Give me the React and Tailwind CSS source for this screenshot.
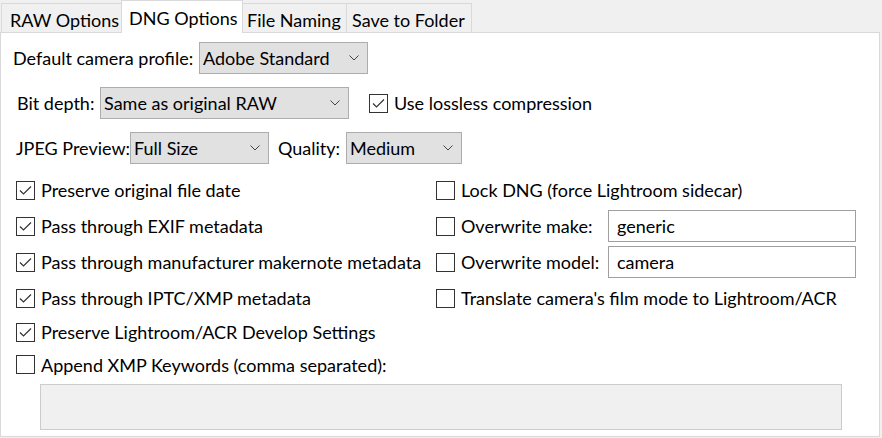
const FONT = "font-['Lato','Noto_Sans',sans-serif]";

function Chevron() {
  return (
    <svg width="10" height="6" viewBox="0 0 10 6" className="shrink-0">
      <path d="M0.5 0.5 L5 5 L9.5 0.5" fill="none" stroke="#444" strokeWidth="1" />
    </svg>
  );
}

function Select({ value, className }) {
  return (
    <div className={`flex h-[32px] items-center justify-between border border-[#adadad] bg-[#e1e1e1] pl-[3px] pr-[8px] ${className}`}>
      <span className="whitespace-nowrap leading-none">{value}</span>
      <Chevron />
    </div>
  );
}

function Check({ checked }) {
  return (
    <div className="flex h-[19px] w-[19px] shrink-0 items-center justify-center border border-[#333] bg-white">
      {checked && (
        <svg width="15" height="15" viewBox="0 0 15 15">
          <path d="M2 7.5 L5.5 11 L13 3.5" fill="none" stroke="#333" strokeWidth="1.2" />
        </svg>
      )}
    </div>
  );
}

function CheckRow({ checked, label, className = '' }) {
  return (
    <div className={`flex items-center gap-[6px] ${className}`}>
      <Check checked={checked} />
      <span className="whitespace-nowrap leading-none">{label}</span>
    </div>
  );
}

function Tab({ label, active, className }) {
  if (active) {
    return (
      <div className={`relative z-10 -mb-px flex h-[33px] items-start whitespace-nowrap border-x border-t border-[#d9d9d9] bg-white pt-[4px] ${className}`}>
        {label}
      </div>
    );
  }
  return (
    <div className={`flex h-[29px] items-start whitespace-nowrap border-t border-[#d9d9d9] bg-[#f0f0f0] pt-[3px] ${className}`}>
      {label}
    </div>
  );
}

export default function App() {
  return (
    <div className={`h-[438px] w-[882px] overflow-hidden bg-[#f0f0f0] text-[18px] text-black ${FONT}`}>
      <div className="flex h-[32px] items-end pl-px">
        <Tab label="RAW Options" className="w-[120px] border-l pl-[8px]" />
        <Tab label="DNG Options" active className="w-[122px] pl-[7px]" />
        <Tab label="File Naming" className="w-[104px] border-r pl-[4px]" />
        <Tab label="Save to Folder" className="w-[125px] border-r pl-[5px]" />
      </div>

      <div className="h-[405px] w-[880px] border border-[#d9d9d9] bg-white">
        <div className="mt-[9px] flex h-[32px] items-center pl-[12px]">
          <span className="w-[186px] whitespace-nowrap">Default camera profile:</span>
          <Select value="Adobe Standard" className="w-[169px]" />
        </div>

        <div className="mt-[13px] flex h-[32px] items-center pl-[16px]">
          <span className="w-[83px] whitespace-nowrap">Bit depth:</span>
          <Select value="Same as original RAW" className="w-[249px]" />
          <CheckRow checked label="Use lossless compression" className="ml-[20px]" />
        </div>

        <div className="mt-[13px] flex h-[32px] items-center pl-[15px]">
          <span className="w-[114px] whitespace-nowrap">JPEG Preview:</span>
          <Select value="Full Size" className="w-[139px]" />
          <span className="ml-[9px] w-[68px] whitespace-nowrap">Quality:</span>
          <Select value="Medium" className="w-[116px]" />
        </div>

        <div className="mt-[8px] flex pl-[15px]">
          <div className="flex w-[420px] flex-col">
            <CheckRow checked label="Preserve original file date" className="h-[36px]" />
            <CheckRow checked label="Pass through EXIF metadata" className="h-[36px]" />
            <CheckRow checked label="Pass through manufacturer makernote metadata" className="h-[36px]" />
            <CheckRow checked label="Pass through IPTC/XMP metadata" className="h-[36px]" />
            <CheckRow checked label="Preserve Lightroom/ACR Develop Settings" className="h-[32px]" />
            <CheckRow label="Append XMP Keywords (comma separated):" className="h-[33px]" />
          </div>
          <div className="flex flex-col">
            <CheckRow label="Lock DNG (force Lightroom sidecar)" className="h-[36px]" />
            <div className="flex h-[36px] items-center">
              <CheckRow label="Overwrite make:" className="w-[172px]" />
              <div className="flex h-[32px] w-[248px] items-center border border-[#a0a0a0] bg-white pl-[8px]">generic</div>
            </div>
            <div className="flex h-[36px] items-center">
              <CheckRow label="Overwrite model:" className="w-[172px]" />
              <div className="flex h-[32px] w-[248px] items-center border border-[#a0a0a0] bg-white pl-[8px]">camera</div>
            </div>
            <CheckRow label="Translate camera's film mode to Lightroom/ACR" className="h-[36px]" />
          </div>
        </div>

        <div className="ml-[39px] mt-[3px] h-[46px] w-[802px] border border-[#cccccc] bg-[#f0f0f0]" />
      </div>
    </div>
  );
}
